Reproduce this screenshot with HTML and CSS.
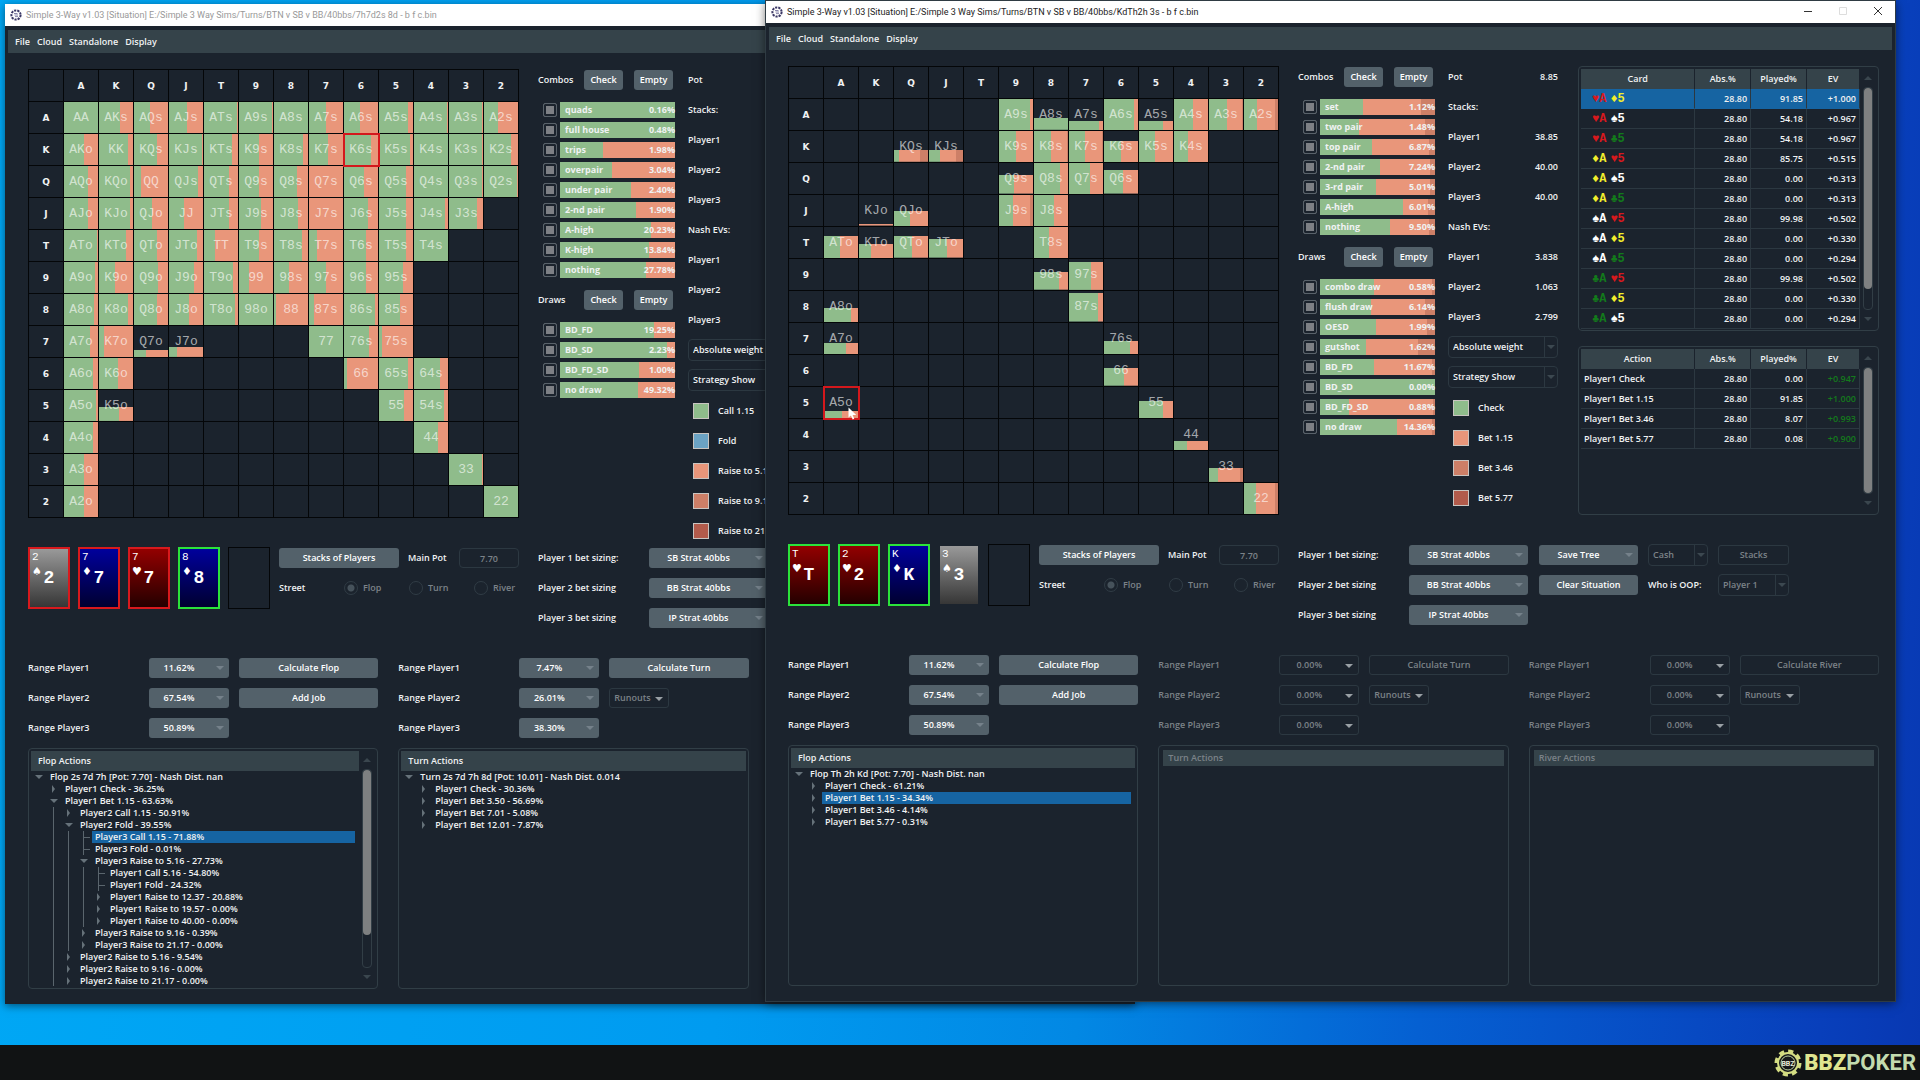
FILE: index.html
```html
<!DOCTYPE html>
<html lang="en">
<head>
  <meta charset="UTF-8" />
  <meta name="viewport" content="width=device-width, initial-scale=1.0" />
  <title>Simple 3-Way v1.03</title>
  <link rel="stylesheet" href="styles.css">
</head>
<body>
  <main class="desktop">

    <!-- ========== LEFT WINDOW (7h7d2s 8d) ========== -->
    <section class="window window-back">
      <header class="title-bar">
        <svg class="app-icon" viewBox="0 0 12 12"><circle cx="6" cy="6" r="4.6" fill="none" stroke="#3b3866" stroke-width="2" stroke-dasharray="2.2 1"/><path d="M4 4.5h3.5M8 6H4.5M5 7.6h3" stroke="#6a6794" stroke-width=".8"/></svg>
        <h1>Simple 3-Way v1.03 [Situation] E:/Simple 3 Way Sims/Turns/BTN v SB v BB/40bbs/7h7d2s 8d - b f c.bin</h1>
      </header>
      <nav class="menu-bar">
        <a href="#">File</a><a href="#">Cloud</a><a href="#">Standalone</a><a href="#">Display</a>
      </nav>

      <div class="content">
        <div class="analysis">
          <table class="hand-grid" id="gridLeft"></table>

          <div class="facets">
            <div class="facet-head"><span>Combos</span><button>Check</button><button>Empty</button></div>
            <div class="facet-list" id="combosLeft"></div>
            <div class="facet-head"><span>Draws</span><button>Check</button><button>Empty</button></div>
            <div class="facet-list" id="drawsLeft"></div>
          </div>

          <div class="stats">
            <dl>
              <div><dt>Pot</dt></div>
              <div><dt>Stacks:</dt></div>
              <div><dt>Player1</dt></div>
              <div><dt>Player2</dt></div>
              <div><dt>Player3</dt></div>
              <div><dt>Nash EVs:</dt></div>
              <div><dt>Player1</dt></div>
              <div><dt>Player2</dt></div>
              <div><dt>Player3</dt></div>
            </dl>
            <div class="combo"><select aria-label="Weight"><option>Absolute weight</option></select></div>
            <div class="combo"><select aria-label="Show"><option>Strategy Show</option></select></div>
            <ul class="legend">
              <li><i class="call"></i>Call 1.15</li>
              <li><i class="fold"></i>Fold</li>
              <li><i class="bet"></i>Raise to 5.16</li>
              <li><i class="bet-mid"></i>Raise to 9.16</li>
              <li><i class="bet-big"></i>Raise to 21.17</li>
            </ul>
          </div>
        </div>

        <div class="controls">
          <div class="board">
            <div class="card spade picked-red"><b>2</b><i>♠</i><strong>2</strong></div>
            <div class="card diamond picked-red"><b>7</b><i>♦</i><strong>7</strong></div>
            <div class="card heart picked-red"><b>7</b><i>♥</i><strong>7</strong></div>
            <div class="card diamond picked"><b>8</b><i>♦</i><strong>8</strong></div>
            <div class="card empty"></div>
          </div>
          <div class="setup">
            <div class="line">
              <button class="stacks-btn">Stacks of Players</button>
              <label for="potLeft">Main Pot</label>
              <input class="pot" id="potLeft" type="text" value="7.70" disabled>
            </div>
            <div class="line street">
              <span>Street</span>
              <label><input type="radio" name="streetLeft" checked disabled>Flop</label>
              <label><input type="radio" name="streetLeft" disabled>Turn</label>
              <label><input type="radio" name="streetLeft" disabled>River</label>
            </div>
          </div>
          <div class="sizing">
            <span>Player 1 bet sizing:</span><button class="menu">SB Strat 40bbs</button>
            <span>Player 2 bet sizing</span><button class="menu">BB Strat 40bbs</button>
            <span>Player 3 bet sizing</span><button class="menu">IP Strat 40bbs</button>
          </div>
        </div>

        <div class="streets">
          <div class="street-col">
            <div class="ranges">
              <span>Range Player1</span><button class="menu">11.62%</button><button>Calculate Flop</button>
              <span>Range Player2</span><button class="menu">67.54%</button><button>Add Job</button>
              <span>Range Player3</span><button class="menu">50.89%</button>
            </div>
            <div class="panel">
              <div class="tree">
                <h2>Flop Actions</h2>
                <ul>
                  <li><p class="open">Flop 2s 7d 7h [Pot: 7.70] - Nash Dist. nan</p>
                    <ul>
                      <li><p class="closed">Player1 Check - 36.25%</p></li>
                      <li><p class="open">Player1 Bet 1.15 - 63.63%</p>
                        <ul class="guide">
                          <li><p class="closed">Player2 Call 1.15 - 50.91%</p></li>
                          <li><p class="open">Player2 Fold - 39.55%</p>
                            <ul class="guide">
                              <li><p class="leaf selected"><span>Player3 Call 1.15 - 71.88%</span></p></li>
                              <li><p class="leaf">Player3 Fold - 0.01%</p></li>
                              <li><p class="open">Player3 Raise to 5.16 - 27.73%</p>
                                <ul class="guide">
                                  <li><p class="leaf">Player1 Call 5.16 - 54.80%</p></li>
                                  <li><p class="leaf">Player1 Fold - 24.32%</p></li>
                                  <li><p class="closed">Player1 Raise to 12.37 - 20.88%</p></li>
                                  <li><p class="closed">Player1 Raise to 19.57 - 0.00%</p></li>
                                  <li><p class="closed">Player1 Raise to 40.00 - 0.00%</p></li>
                                </ul>
                              </li>
                              <li><p class="closed">Player3 Raise to 9.16 - 0.39%</p></li>
                              <li><p class="closed">Player3 Raise to 21.17 - 0.00%</p></li>
                            </ul>
                          </li>
                          <li><p class="closed">Player2 Raise to 5.16 - 9.54%</p></li>
                          <li><p class="closed">Player2 Raise to 9.16 - 0.00%</p></li>
                          <li><p class="closed">Player2 Raise to 21.17 - 0.00%</p></li>
                        </ul>
                      </li>
                    </ul>
                  </li>
                </ul>
              </div>
              <div class="scrollbar"><i class="up"></i><div class="track"><div class="thumb" style="height: 84%"></div></div><i class="down"></i></div>
            </div>
          </div>

          <div class="street-col">
            <div class="ranges">
              <span>Range Player1</span><button class="menu">7.47%</button><button>Calculate Turn</button>
              <span>Range Player2</span><button class="menu">26.01%</button><button class="menu runouts" disabled>Runouts</button>
              <span>Range Player3</span><button class="menu">38.30%</button>
            </div>
            <div class="panel">
              <div class="tree">
                <h2>Turn Actions</h2>
                <ul>
                  <li><p class="open">Turn 2s 7d 7h 8d [Pot: 10.01] - Nash Dist. 0.014</p>
                    <ul>
                      <li><p class="closed">Player1 Check - 30.36%</p></li>
                      <li><p class="closed">Player1 Bet 3.50 - 56.69%</p></li>
                      <li><p class="closed">Player1 Bet 7.01 - 5.08%</p></li>
                      <li><p class="closed">Player1 Bet 12.01 - 7.87%</p></li>
                    </ul>
                  </li>
                </ul>
              </div>
            </div>
          </div>
        </div>
      </div>
    </section>

    <!-- ========== RIGHT WINDOW (KdTh2h 3s) ========== -->
    <section class="window window-front">
      <header class="title-bar">
        <svg class="app-icon" viewBox="0 0 12 12"><circle cx="6" cy="6" r="4.6" fill="none" stroke="#3b3866" stroke-width="2" stroke-dasharray="2.2 1"/><path d="M4 4.5h3.5M8 6H4.5M5 7.6h3" stroke="#6a6794" stroke-width=".8"/></svg>
        <h1>Simple 3-Way v1.03 [Situation] E:/Simple 3 Way Sims/Turns/BTN v SB v BB/40bbs/KdTh2h 3s - b f c.bin</h1>
        <div class="window-buttons">
          <button aria-label="Minimize"><svg viewBox="0 0 8 8"><path d="M0 4.5h8" stroke="#333"/></svg></button>
          <button aria-label="Maximize" disabled><svg viewBox="0 0 8 8"><path d="M.5.5h7v7h-7z" fill="none" stroke="#ddd"/></svg></button>
          <button aria-label="Close"><svg viewBox="0 0 8 8"><path d="M0 0l8 8M8 0L0 8" stroke="#333"/></svg></button>
        </div>
      </header>
      <nav class="menu-bar">
        <a href="#">File</a><a href="#">Cloud</a><a href="#">Standalone</a><a href="#">Display</a>
      </nav>

      <div class="content">
        <div class="analysis">
          <table class="hand-grid" id="gridRight"></table>

          <div class="facets">
            <div class="facet-head"><span>Combos</span><button>Check</button><button>Empty</button></div>
            <div class="facet-list" id="combosRight"></div>
            <div class="facet-head"><span>Draws</span><button>Check</button><button>Empty</button></div>
            <div class="facet-list" id="drawsRight"></div>
          </div>

          <div class="stats">
            <dl>
              <div><dt>Pot</dt><dd>8.85</dd></div>
              <div><dt>Stacks:</dt></div>
              <div><dt>Player1</dt><dd>38.85</dd></div>
              <div><dt>Player2</dt><dd>40.00</dd></div>
              <div><dt>Player3</dt><dd>40.00</dd></div>
              <div><dt>Nash EVs:</dt></div>
              <div><dt>Player1</dt><dd>3.838</dd></div>
              <div><dt>Player2</dt><dd>1.063</dd></div>
              <div><dt>Player3</dt><dd>2.799</dd></div>
            </dl>
            <div class="combo"><select aria-label="Weight"><option>Absolute weight</option></select></div>
            <div class="combo"><select aria-label="Show"><option>Strategy Show</option></select></div>
            <ul class="legend">
              <li><i class="call"></i>Check</li>
              <li><i class="bet"></i>Bet 1.15</li>
              <li><i class="bet-mid"></i>Bet 3.46</li>
              <li><i class="bet-big"></i>Bet 5.77</li>
            </ul>
          </div>

          <div class="tables">
            <div class="panel hands-panel">
              <table class="data-table">
                <thead><tr><th>Card</th><th>Abs.%</th><th>Played%</th><th>EV</th></tr></thead>
                <tbody id="handRows"></tbody>
              </table>
              <div class="scrollbar"><i class="up"></i><div class="track"><div class="thumb" style="height: 91%"></div></div><i class="down"></i></div>
            </div>
            <div class="panel actions-panel">
              <table class="data-table">
                <thead><tr><th>Action</th><th>Abs.%</th><th>Played%</th><th>EV</th></tr></thead>
                <tbody>
                  <tr><td>Player1 Check</td><td>28.80</td><td>0.00</td><td class="gain">+0.947</td></tr>
                  <tr><td>Player1 Bet 1.15</td><td>28.80</td><td>91.85</td><td class="gain">+1.000</td></tr>
                  <tr><td>Player1 Bet 3.46</td><td>28.80</td><td>8.07</td><td class="gain">+0.993</td></tr>
                  <tr><td>Player1 Bet 5.77</td><td>28.80</td><td>0.08</td><td class="gain">+0.900</td></tr>
                </tbody>
              </table>
              <div class="scrollbar"><i class="up"></i><div class="track"><div class="thumb" style="height: 100%"></div></div><i class="down"></i></div>
            </div>
          </div>
        </div>

        <div class="controls">
          <div class="board">
            <div class="card heart picked"><b>T</b><i>♥</i><strong>T</strong></div>
            <div class="card heart picked"><b>2</b><i>♥</i><strong>2</strong></div>
            <div class="card diamond picked"><b>K</b><i>♦</i><strong>K</strong></div>
            <div class="card spade"><b>3</b><i>♠</i><strong>3</strong></div>
            <div class="card empty"></div>
          </div>
          <div class="setup">
            <div class="line">
              <button class="stacks-btn">Stacks of Players</button>
              <label for="potRight">Main Pot</label>
              <input class="pot" id="potRight" type="text" value="7.70" disabled>
            </div>
            <div class="line street">
              <span>Street</span>
              <label><input type="radio" name="streetRight" checked disabled>Flop</label>
              <label><input type="radio" name="streetRight" disabled>Turn</label>
              <label><input type="radio" name="streetRight" disabled>River</label>
            </div>
          </div>
          <div class="sizing">
            <span>Player 1 bet sizing:</span><button class="menu">SB Strat 40bbs</button>
            <span>Player 2 bet sizing</span><button class="menu">BB Strat 40bbs</button>
            <span>Player 3 bet sizing</span><button class="menu">IP Strat 40bbs</button>
          </div>
          <div class="session">
            <button class="menu">Save Tree</button>
            <div class="combo"><select aria-label="Game type" disabled><option>Cash</option></select></div>
            <button disabled>Stacks</button>
            <button>Clear Situation</button>
            <label for="oop">Who is OOP:</label>
            <div class="combo"><select id="oop" disabled><option>Player 1</option></select></div>
          </div>
        </div>

        <div class="streets">
          <div class="street-col">
            <div class="ranges">
              <span>Range Player1</span><button class="menu">11.62%</button><button>Calculate Flop</button>
              <span>Range Player2</span><button class="menu">67.54%</button><button>Add Job</button>
              <span>Range Player3</span><button class="menu">50.89%</button>
            </div>
            <div class="panel">
              <div class="tree">
                <h2>Flop Actions</h2>
                <ul>
                  <li><p class="open">Flop Th 2h Kd [Pot: 7.70] - Nash Dist. nan</p>
                    <ul>
                      <li><p class="closed">Player1 Check - 61.21%</p></li>
                      <li><p class="closed selected"><span>Player1 Bet 1.15 - 34.34%</span></p></li>
                      <li><p class="closed">Player1 Bet 3.46 - 4.14%</p></li>
                      <li><p class="closed">Player1 Bet 5.77 - 0.31%</p></li>
                    </ul>
                  </li>
                </ul>
              </div>
            </div>
          </div>

          <div class="street-col off">
            <div class="ranges">
              <span>Range Player1</span><button class="menu" disabled>0.00%</button><button disabled>Calculate Turn</button>
              <span>Range Player2</span><button class="menu" disabled>0.00%</button><button class="menu runouts" disabled>Runouts</button>
              <span>Range Player3</span><button class="menu" disabled>0.00%</button>
            </div>
            <div class="panel"><div class="tree"><h2>Turn Actions</h2></div></div>
          </div>

          <div class="street-col off">
            <div class="ranges">
              <span>Range Player1</span><button class="menu" disabled>0.00%</button><button disabled>Calculate River</button>
              <span>Range Player2</span><button class="menu" disabled>0.00%</button><button class="menu runouts" disabled>Runouts</button>
              <span>Range Player3</span><button class="menu" disabled>0.00%</button>
            </div>
            <div class="panel"><div class="tree"><h2>River Actions</h2></div></div>
          </div>
        </div>
      </div>
    </section>
  </main>

  <!-- ========== TASKBAR ========== -->
  <footer class="taskbar">
    <svg class="chip" viewBox="0 0 28 28">
      <circle cx="14" cy="14" r="11.5" fill="none" stroke="#d3dc82" stroke-width="4" stroke-dasharray="5 4"/>
      <circle cx="14" cy="14" r="10" fill="#16181a" stroke="#d3dc82" stroke-width="2"/>
      <circle cx="14" cy="14" r="7" fill="none" stroke="#b9cf9c" stroke-width="1"/>
      <text x="14" y="17" text-anchor="middle">BBZ</text>
    </svg>
    <span class="brand"><b>BBZ</b>POKER</span>
  </footer>

  <script src="script.js"></script>
</body>
</html>
```
FILE: styles.css
```css
*,
*::before,
*::after {
  margin: 0;
  padding: 0;
  box-sizing: border-box;
}

body {
  --bg: #1b232d;
  --bar: #35434a;
  --line: #2c3841;
  --button: #53616a;
  --muted: #7b8288;
  --select: #1664a2;
  --green: #8fbc8b;
  --salmon: #e9967a;
  --salmon-mid: #cd7f67;
  --salmon-big: #b25b4b;
  display: flex;
  flex-direction: column;
  min-height: 100vh;
  overflow: hidden;
  font: 600 9px/12px "Open Sans", "Noto Sans", sans-serif;
  color: #f0f2f3;
  background: #111314;
}

ul { list-style: none; }

.desktop {
  position: relative;
  flex: 1;
  background: linear-gradient(95deg, #00a8f5 0%, #009bf0 40%, #0288e4 58%, #0560d2 75%, #083fbb 95%, #0838b2 100%);
}

/* =========================================
   WINDOWS
   ========================================= */
.window {
  position: absolute;
  display: flex;
  flex-direction: column;
  background: var(--bg);
  box-shadow: 0 2px 8px rgba(0, 0, 0, 0.5);
}

.window-back {
  top: 4px;
  left: 5px;
  right: 785px;
  bottom: 41px;
}

.window-front {
  top: 1px;
  left: 766px;
  right: 25px;
  bottom: 44px;
  box-shadow: 0 0 0 1px #2f3b43, 0 2px 10px rgba(0, 0, 0, 0.6);
}

.title-bar {
  display: flex;
  align-items: center;
  height: 22px;
  padding-left: 5px;
  background: #fff;
}

.title-bar h1 {
  flex: 1;
  margin-left: 4px;
  font: 9px/12px "Roboto", sans-serif;
  color: #222;
}

.window-back h1 { color: #999; }

.app-icon {
  width: 12px;
  height: 12px;
}

.window-buttons { display: flex; }

.window-buttons button {
  width: 35px;
  height: 22px;
  background: none;
}

.window-buttons svg {
  width: 8px;
  height: 8px;
}

.menu-bar {
  display: flex;
  align-items: center;
  gap: 7px;
  height: 23px;
  margin: 4px 3px 0;
  padding-left: 7px;
  background: var(--bar);
}

.menu-bar a {
  color: inherit;
  text-decoration: none;
}

.content {
  flex: 1;
  display: flex;
  flex-direction: column;
  min-height: 0;
  padding: 16px 16px 15px 23px;
}

.window-front .content { padding-left: 22px; }

/* =========================================
   CONTROLS
   ========================================= */
button {
  height: 20px;
  border: 0;
  border-radius: 3px;
  font: inherit;
  color: #fff;
  background: var(--button);
}

button:disabled {
  border: 1px solid var(--line);
  color: var(--muted);
  background: none;
}

.window-buttons button:disabled { border: 0; }

.menu {
  position: relative;
  padding-right: 20px;
}

.menu::after,
.combo::after,
.up,
.down {
  content: "";
  border: 4px solid transparent;
  border-top-color: #75818a;
  border-bottom: 0;
}

.menu::after {
  position: absolute;
  right: 5px;
  top: 8px;
}

.menu:disabled::after { border-top-color: #99a0a5; }

.runouts {
  width: 60px;
  padding-left: 4px;
  text-align: left;
}

.combo {
  position: relative;
  height: 22px;
}

.combo::after {
  position: absolute;
  right: 3px;
  top: 9px;
  border-top-color: #3c4850;
}

.combo::before {
  content: "";
  position: absolute;
  right: 13px;
  top: 1px;
  bottom: 1px;
  border-left: 1px solid var(--line);
}

.combo select {
  appearance: none;
  width: 100%;
  height: 22px;
  padding-left: 4px;
  border: 1px solid var(--line);
  border-radius: 4px;
  font: inherit;
  color: #f0f2f3;
  background: var(--bg);
}

.combo select:disabled {
  opacity: 1;
  color: var(--muted);
}

.pot {
  width: 60px;
  height: 20px;
  border: 1px solid var(--line);
  border-radius: 4px;
  font: inherit;
  text-align: center;
  color: var(--muted);
  background: none;
}

input[type="radio"] {
  appearance: none;
  width: 14px;
  height: 14px;
  border: 1px solid #303c45;
  border-radius: 50%;
}

input[type="radio"]:checked {
  background: radial-gradient(circle, #46525b 0 3px, transparent 4px);
}

.panel {
  display: flex;
  padding: 2px;
  border: 1px solid #313e46;
  border-radius: 4px;
}

.scrollbar {
  display: flex;
  flex-direction: column;
  align-items: center;
  width: 16px;
}

.up,
.down {
  border-top-color: #3a464e;
  margin: 7px 0;
}

.up { transform: rotate(180deg); }

.track {
  flex: 1;
  width: 10px;
  border: 1px solid #323e46;
  border-radius: 4px;
}

.thumb {
  border-radius: 4px;
  background: #7e8081;
}

/* =========================================
   HAND GRID
   ========================================= */
.analysis {
  display: flex;
  align-items: flex-start;
  height: 449px;
}

.hand-grid {
  flex: none;
  width: 491px;
  margin-right: 19px;
  border-collapse: collapse;
  table-layout: fixed;
}

.hand-grid th,
.hand-grid td {
  width: 35px;
  height: 32px;
  border: 1px solid #040608;
  text-align: center;
}

.hand-grid th { font: bold 9px/12px "DejaVu Sans", sans-serif; }

.hand-grid td {
  font: 13px/16px "Liberation Mono", monospace;
  color: rgba(255, 255, 255, 0.62);
}

.mix {
  background: linear-gradient(to right, var(--green) var(--call), var(--salmon) var(--call) var(--bet), var(--salmon-mid) var(--bet)) bottom / 100% var(--weight, 100%) no-repeat;
}

.hand-grid .current {
  position: relative;
  z-index: 1;
  outline: 2px solid #d4181c;
  outline-offset: -1px;
}

/* =========================================
   COMBOS / DRAWS
   ========================================= */
.facets {
  flex: none;
  width: 137px;
  margin: 1px 13px 0 0;
}

.facet-head {
  display: flex;
  align-items: center;
  height: 20px;
}

.facet-head span { width: 46px; }

.facet-head button {
  width: 39px;
  margin-right: 11px;
}

.facet-head button:last-child { margin-right: 0; }

.facet-list { padding: 10px 0; }

.facet {
  display: flex;
  align-items: center;
  height: 20px;
  padding-left: 5px;
}

.facet input {
  appearance: none;
  width: 14px;
  height: 14px;
  border: 1px solid #59626a;
  border-radius: 2px;
  background: #7d8085;
  box-shadow: inset 0 0 0 2px var(--bg);
}

.facet label {
  flex: 1;
  display: flex;
  justify-content: space-between;
  height: 16px;
  margin-left: 3px;
  padding-left: 5px;
  font-weight: 700;
  line-height: 16px;
}

/* =========================================
   STACKS / LEGEND
   ========================================= */
.stats {
  flex: none;
  width: 110px;
  margin: 1px 20px 0 0;
}

.stats dl { margin-top: -5px; }

.stats dl div {
  display: flex;
  justify-content: space-between;
  height: 30px;
  line-height: 30px;
}

.stats .combo { margin: 4px 0 8px; }

.legend { margin-top: -3px; }

.legend li {
  display: flex;
  align-items: center;
  height: 30px;
  padding-left: 5px;
  white-space: nowrap;
}

.legend i {
  width: 16px;
  height: 16px;
  margin-right: 9px;
  border: 1px solid #c8c4c0;
}

.legend .call { background: var(--green); }
.legend .fold { background: #6ba3c4; }
.legend .bet { background: var(--salmon); }
.legend .bet-mid { background: var(--salmon-mid); }
.legend .bet-big { background: var(--salmon-big); }

/* =========================================
   HAND / ACTION TABLES
   ========================================= */
.tables { flex: 1; }

.hands-panel {
  height: 265px;
  overflow: hidden;
}

.actions-panel {
  height: 169px;
  margin-top: 15px;
}

.data-table {
  flex: 1;
  align-self: flex-start;
  border-spacing: 0;
  table-layout: fixed;
}

.data-table th,
.data-table td {
  width: 20%;
  height: 20px;
  border-right: 1px solid var(--line);
}

.data-table th {
  border-color: var(--bg);
  font-weight: 600;
  background: var(--bar);
}

.data-table th:first-child { width: 41%; }

.data-table td {
  padding-right: 3px;
  border-bottom: 1px solid var(--line);
  text-align: right;
}

.data-table td:first-child {
  padding-left: 3px;
  text-align: left;
}

.data-table .selected td {
  border-bottom-color: var(--select);
  background: var(--select);
}

.data-table .gain { color: #147a1c; }

.data-table td.hand:first-child {
  padding-left: 11px;
  font: bold 12px/12px "Liberation Mono", "DejaVu Sans", monospace;
}

.hand span { margin-right: 4px; }
.h { color: #d8191d; }
.d { color: #f2ee2c; }
.s { color: #fff; }
.c { color: #137a1b; }

/* =========================================
   BOARD AND SETUP
   ========================================= */
.controls {
  display: flex;
  align-items: flex-start;
  margin-top: 25px;
}

.board {
  display: flex;
  gap: 8px;
  margin: 4px 9px 0 0;
}

.card {
  position: relative;
  display: flex;
  flex-direction: column;
  width: 42px;
  height: 62px;
  padding: 2px;
  border: 2px solid transparent;
  background-clip: padding-box;
  font: 11px/13px "Liberation Mono", "DejaVu Sans", monospace;
  color: #fff;
}

.card b { font-weight: normal; }

.card i {
  font: 11px/16px "DejaVu Sans", sans-serif;
}

.card strong {
  position: absolute;
  inset: 0;
  font-size: 18px;
  line-height: 58px;
  text-align: center;
}

.heart { background-image: linear-gradient(#930000, #240000); }
.diamond { background-image: linear-gradient(#00009c, #000030); }
.spade { background-image: linear-gradient(#999, #363636); }
.picked { border-color: #2be23a; }
.picked-red { border-color: #d8191d; }
.empty { border: 1px solid #040608; }

.setup {
  width: 240px;
  margin-right: 19px;
}

.line {
  display: flex;
  align-items: center;
  height: 30px;
}

.stacks-btn {
  width: 120px;
  margin-right: 9px;
}

.line .pot { margin-left: auto; }

.street span { width: 65px; }

.street label {
  display: flex;
  align-items: center;
  width: 65px;
  gap: 5px;
  color: var(--muted);
}

.street label:last-child { width: 45px; }

.sizing {
  display: grid;
  grid-template-columns: 111px 119px;
  grid-auto-rows: 30px;
  align-items: center;
  margin-right: 11px;
}

.session {
  display: grid;
  grid-template-columns: 99px 60px 71px;
  grid-auto-rows: 30px;
  column-gap: 10px;
  align-items: center;
}

.session label { white-space: nowrap; }

/* =========================================
   STREET COLUMNS
   ========================================= */
.streets {
  flex: 1;
  display: grid;
  grid-template-columns: repeat(3, 1fr);
  gap: 20px;
  min-height: 0;
  margin-top: 20px;
}

.street-col {
  display: flex;
  flex-direction: column;
  min-height: 0;
}

.ranges {
  display: grid;
  grid-template-columns: 111px 80px 1fr;
  grid-auto-rows: 30px;
  column-gap: 10px;
  align-items: center;
}

.street-col .panel {
  flex: 1;
  min-height: 0;
  margin-top: 5px;
}

.off { color: var(--muted); }
.off .panel { padding: 4px; }

.tree {
  flex: 1;
  overflow: hidden;
}

.tree h2 {
  height: 20px;
  padding-left: 7px;
  font: inherit;
  line-height: 20px;
  background: var(--bar);
}

.off h2 {
  height: 16px;
  padding-left: 5px;
  line-height: 16px;
}

.tree ul ul { padding-left: 15px; }

.tree .guide {
  background: linear-gradient(#5a656d, #5a656d) 7px 0 / 1px 100% no-repeat;
}

.tree p {
  display: flex;
  align-items: center;
  height: 12px;
  padding-right: 4px;
  white-space: nowrap;
}

.tree p::before {
  content: "";
  width: 8px;
  margin: 0 7px 0 4px;
}

.tree p.open::before {
  border: 4px solid transparent;
  border-top-color: #66727a;
  border-bottom: 0;
}

.tree p.closed::before {
  width: 3px;
  margin: 0 10px 0 6px;
  border: 4px solid transparent;
  border-left: 3px solid #66727a;
  border-right: 0;
}

.tree p.leaf::before {
  width: 9px;
  height: 12px;
  margin: 0 3px 0 7px;
  border-left: 1px solid #5a656d;
  background: linear-gradient(#5a656d, #5a656d) 0 6px / 6px 1px no-repeat;
}

.tree .selected span {
  flex: 1;
  margin-left: -3px;
  padding-left: 3px;
  background: var(--select);
}

/* =========================================
   TASKBAR / CURSOR
   ========================================= */
.taskbar {
  display: flex;
  align-items: center;
  justify-content: flex-end;
  gap: 2px;
  height: 35px;
  padding-right: 4px;
}

.chip {
  width: 28px;
  height: 28px;
}

.chip text {
  font: bold 7px "Roboto", sans-serif;
  fill: #e6ecd8;
}

.brand {
  font: bold 22px/35px "Roboto", sans-serif;
  color: #c3dbae;
}

.brand b { color: #dfe58f; }

.cursor {
  position: absolute;
  left: 24px;
  top: 20px;
  width: 9px;
  height: 14px;
}
```
FILE: script.js
```js
// ========== HAND GRIDS ==========
// Each cell is "call% [bet end%] [weight%]", "-" is a hand outside the range
const RANKS = 'AKQJT98765432';

const leftGrid = [
  '100,62,48,53,98,98,100,49,48,86,98,98,42',
  '60,84,69,98,82,59,84,57,78,90,100,98,78',
  '70,92,22,86,73,60,68,0,60,78,100,98,97',
  '71,92,54,45,73,66,71,0,70,80,92,83,-',
  '97,79,69,81,33,60,81,25,64,80,100,-,-',
  '92,46,71,75,86,28,45,49,64,70,-,-,-',
  '89,86,69,60,90,100,6,15,92,63,-,-,-',
  '77,15,34 100 23,25 100 32,-,-,-,100,74,10,-,-,-',
  '85,56,-,-,-,-,-,-,8,84,76,-,-',
  '94,58 100 45,-,-,-,-,-,-,-,74,88,-,-',
  '84,-,-,-,-,-,-,-,-,-,71,-,-',
  '58,-,-,-,-,-,-,-,-,-,-,97,-',
  '60,-,-,-,-,-,-,-,-,-,-,-,100'
];

const rightGrid = [
  '-,-,-,-,-,90,100 100 38,88 100 30,88,70 100 30,57,54 97,38 92',
  '-,-,15 77 38,31 80 38,-,51,50 97,48 97,49 100 68,46,42,-,-',
  '-,-,-,-,-,44 100 60,76,61,55 100 76,-,-,-,-',
  '-,0 100 5,46 100 50,-,-,40 90,60,-,-,-,-,-,-',
  '47 100 72,34 100 46,53 100 70,54 100 60,-,-,45,-,-,-,-,-,-',
  '-,-,-,-,-,-,74 100 57,64 100 90,-,-,-,-,-',
  '78 100 46,-,-,-,-,-,-,85 100 92,-,-,-,-,-',
  '66 100 36,-,-,-,-,-,-,-,75 100 43,-,-,-,-',
  '-,-,-,-,-,-,-,-,58 100 57,-,-,-,-',
  '53 100 23,-,-,-,-,-,-,-,-,72 100 56,-,-,-',
  '-,-,-,-,-,-,-,-,-,-,38 100 29,-,-',
  '-,-,-,-,-,-,-,-,-,-,-,27 91 45,-',
  '-,-,-,-,-,-,-,-,-,-,-,-,36 92'
];

const CURSOR = '<svg class="cursor" viewBox="0 0 9 14"><path d="M.5.5v10l2.4-2 1.8 4 1.6-.8-1.7-3.7h3.6z" fill="#fff"/></svg>';

function handName(row, col) {
  if (row === col) return RANKS[row] + RANKS[row];
  return row < col ? RANKS[row] + RANKS[col] + 's' : RANKS[col] + RANKS[row] + 'o';
}

function mixStyle(call, bet, weight) {
  return `--call:${call}%;--bet:${bet || 100}%;--weight:${weight || 100}%`;
}

function drawGrid(id, rows, current, extra) {
  let html = '<tr><th></th>' + [...RANKS].map(r => `<th scope="col">${r}</th>`).join('') + '</tr>';
  rows.forEach((line, r) => {
    html += `<tr><th scope="row">${RANKS[r]}</th>`;
    line.split(',').forEach((cell, c) => {
      if (cell === '-') {
        html += '<td></td>';
        return;
      }
      const name = handName(r, c);
      const isCurrent = name === current;
      html += `<td class="mix${isCurrent ? ' current' : ''}" style="${mixStyle(...cell.split(' '))}">${name}${isCurrent ? extra : ''}</td>`;
    });
    html += '</tr>';
  });
  document.getElementById(id).innerHTML = html;
}

drawGrid('gridLeft', leftGrid, 'K6s', '');
drawGrid('gridRight', rightGrid, 'A5o', CURSOR);

// ========== COMBOS / DRAWS ==========
// [name, share, call%, bet end%]
function drawFacets(id, facets) {
  document.getElementById(id).innerHTML = facets.map(([name, share, call, bet], i) => `
    <div class="facet">
      <input type="checkbox" id="${id}${i}">
      <label class="mix" for="${id}${i}" style="${mixStyle(call, bet)}"><span>${name}</span><span>${share}%</span></label>
    </div>`).join('');
}

drawFacets('combosLeft', [
  ['quads', '0.16', 100], ['full house', '0.48', 100], ['trips', '1.98', 37],
  ['overpair', '3.04', 45], ['under pair', '2.40', 62], ['2-nd pair', '1.90', 66],
  ['A-high', '20.23', 79], ['K-high', '13.84', 77], ['nothing', '27.78', 75]
]);
drawFacets('drawsLeft', [
  ['BD_FD', '19.25', 82], ['BD_SD', '2.23', 93], ['BD_FD_SD', '1.00', 69], ['no draw', '49.32', 68]
]);
drawFacets('combosRight', [
  ['set', '1.12', 37, 88], ['two pair', '1.48', 34, 91], ['top pair', '6.87', 45, 95],
  ['2-nd pair', '7.24', 52, 96], ['3-rd pair', '5.01', 49, 96], ['A-high', '6.01', 72, 94],
  ['nothing', '9.50', 61, 95]
]);
drawFacets('drawsRight', [
  ['combo draw', '0.58', 47, 97], ['flush draw', '6.14', 44, 91], ['OESD', '1.99', 49, 93],
  ['gutshot', '1.62', 40, 85], ['BD_FD', '11.67', 47, 97], ['BD_SD', '0.00', 100],
  ['BD_FD_SD', '0.88', 25, 98], ['no draw', '14.36', 67, 97]
]);

// ========== HAND TABLE ==========
const SUITS = { h: '♥', d: '♦', s: '♠', c: '♣' };
const hands = [
  ['hd', '91.85', '+1.000'], ['hs', '54.18', '+0.967'], ['hc', '54.18', '+0.967'],
  ['dh', '85.75', '+0.515'], ['ds', '0.00', '+0.313'], ['dc', '0.00', '+0.313'],
  ['sh', '99.98', '+0.502'], ['sd', '0.00', '+0.330'], ['sc', '0.00', '+0.294'],
  ['ch', '99.98', '+0.502'], ['cd', '0.00', '+0.330'], ['cs', '0.00', '+0.294']
];

document.getElementById('handRows').innerHTML = hands.map(([suits, played, ev], i) => `
  <tr${i === 0 ? ' class="selected"' : ''}>
    <td class="hand"><span class="${suits[0]}">${SUITS[suits[0]]}A</span><span class="${suits[1]}">${SUITS[suits[1]]}5</span></td>
    <td>28.80</td><td>${played}</td><td>${ev}</td>
  </tr>`).join('');
```
